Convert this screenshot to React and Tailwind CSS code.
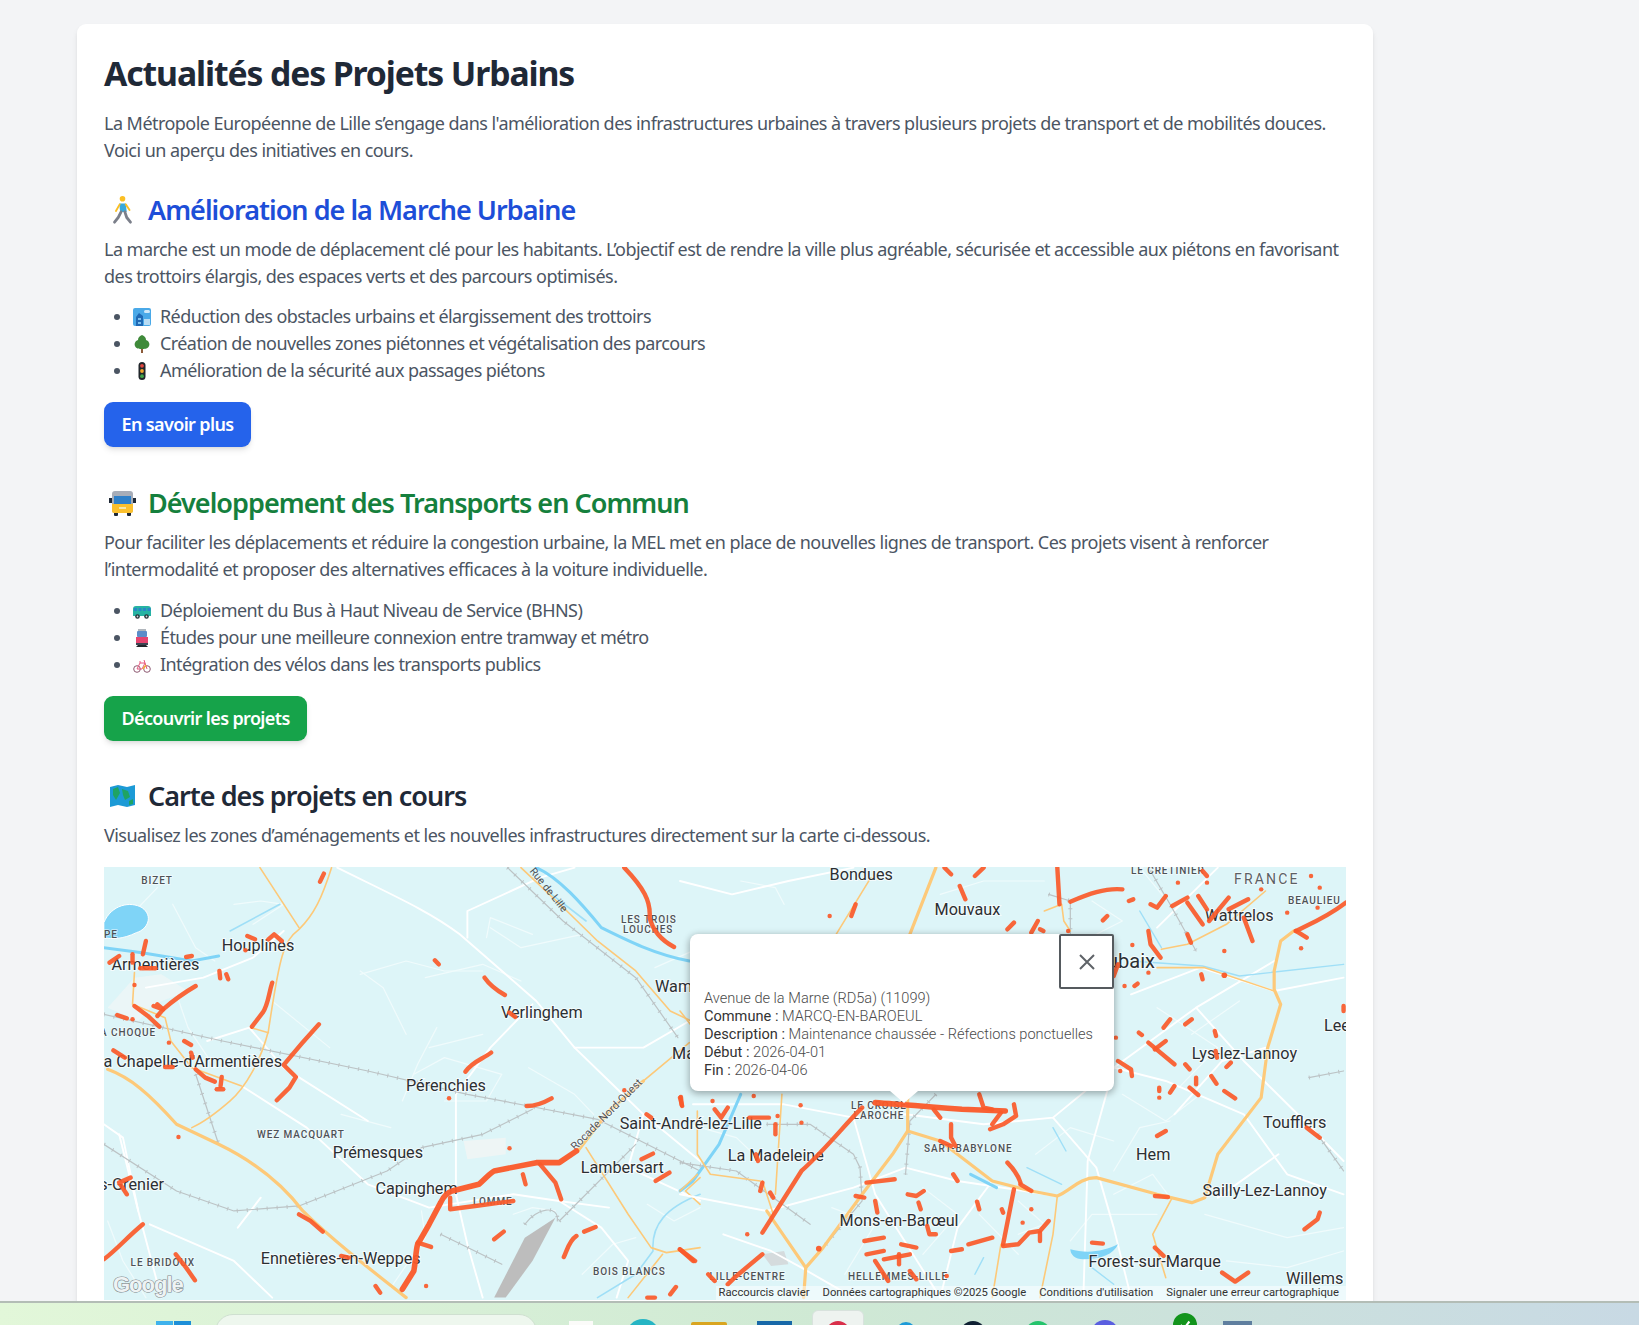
import React from 'react';

// Traces are written in the coordinates of two crops of the map, then scaled back
const WEST = 'translate(100 860) scale(.3827 .3333)';
const EAST = 'translate(680 860) scale(.4337 .3333)';

const westWhite = [
  'M620 20 C760 100 860 150 940 220 L1060 340 L1140 420 L1240 560 L1330 660 L1420 760 L1568 900',
  'M370 675 L540 800 L700 970 L860 1040 L1080 1000 L1200 1020 L1330 1040',
  'M1130 430 L1020 560 L930 700 L930 1000 L960 1150 L1000 1310',
  'M960 230 L960 150 L1150 50 L1240 20',
  'M50 820 L100 1050 L160 1310',
  'M10 790 L60 830 L100 1050',
  'M120 380 L270 350 L400 290 L480 210',
  'M280 540 L390 500 L480 620 L700 780',
  'M1200 1020 L1310 1100 L1380 1200 L1350 1310',
  'M1240 560 L1420 560 L1540 480',
  'M130 1090 L350 1200 L450 1310',
  'M420 1010 L360 1100',
  'M1420 760 L1380 920 L1568 1020',
];
const westThin = [
  'M850 350 L1000 310 L1100 360',
  'M680 330 L740 380 L800 520',
  'M860 560 L1000 520',
  'M1430 1030 L1500 1080 L1568 1040',
  'M450 420 L600 560',
  'M190 130 L250 260 L300 300',
  'M350 130 L420 120 L480 130 L400 190',
  'M150 80 L100 140',
  'M680 340 L800 300 L900 330 L1000 330',
  'M820 640 L900 590 L1050 640 L1010 720 L900 720',
  'M1020 200 L1100 260 L1260 220',
  'M790 720 L830 610 L880 500',
  'M1010 230 L1020 170 L1130 220',
  'M630 760 L760 800',
  'M1080 1060 L1130 1040 L1190 1050',
  'M1260 1240 L1340 1150 L1400 1130',
  'M840 1050 L850 1130 L760 1280',
  'M200 400 L230 500 L300 620',
  'M20 1080 L60 1200 L120 1310',
  'M1450 320 L1568 260',
  'M1120 620 L1240 700 L1290 760',
];
const westWater = [
  'M1140 20 C1200 50 1260 130 1310 200 C1380 240 1450 280 1540 300',
  'M10 260 L110 275 L240 300 L310 285',
];
const westThinWater = [
  'M340 210 L470 130',
  'M1180 100 L1270 180',
  'M1568 1000 C1480 1040 1440 1090 1445 1170 L1400 1240 L1300 1310',
];
const westRail = [
  'M10 460 L320 540 L700 630 L960 700 L1120 735 L1300 775 L1568 930',
  'M10 850 L200 990 L350 1050 L520 1035 L750 930 L840 860 L1000 820 L1130 745',
  'M1065 20 L1210 180 L1400 350 L1510 530',
  'M250 640 L310 850',
  'M1200 1080 L1400 850',
  'M890 1120 L1050 1210',
  'M1110 1090 C1140 1040 1200 1030 1195 1080',
];
const westOrange = [
  'M418 20 L520 200',
  'M605 20 C580 110 560 160 520 205 C480 240 470 280 440 510 C420 600 380 680 340 720 C300 760 260 790 240 800',
  'M90 335 L85 430 L170 470 L185 540 L240 620 L370 675',
  'M395 500 L440 515',
  'M1100 20 L1220 150 L1300 240 L1400 330 L1490 450 L1545 480',
  'M1420 660 L1540 545',
  'M1270 860 L1380 1060 L1440 1160 L1480 1175 L1568 1160',
  'M1470 1180 L1380 1310',
  'M1530 990 L1568 950 M1530 990 L1568 1030',
];
const westOrangeWide = [
  'M20 625 C80 650 130 700 200 790 L310 850 C400 900 470 960 530 1050 C600 1130 700 1220 800 1310',
  'M1420 660 L1330 750 L1250 868',
];
const westRed = [
  'M1370 20 C1420 80 1440 120 1436 170 C1445 210 1470 240 1500 258',
  'M585 38 L575 62', 'M385 225 L405 235', 'M440 235 L455 220 L475 240', 'M120 240 L112 280',
  'M25 305 L50 285', 'M85 280 L85 305', 'M105 322 L145 322', 'M225 288 L240 285',
  'M312 330 L314 352', 'M330 340 L335 355', 'M380 268 l.1 0', 'M875 298 L885 310',
  'M1005 350 C1020 375 1040 390 1058 402', 'M1070 455 L1085 468',
  'M250 375 C220 395 190 420 165 445 L150 465', 'M140 435 L165 445 L150 430',
  'M90 435 L125 465 L155 497', 'M45 462 L70 472', 'M85 475 l.1 0', 'M90 372 l.1 0',
  'M450 365 C440 400 440 430 425 455 L397 497',
  'M572 490 C540 530 510 570 480 612 L512 648 L495 680 L462 718',
  'M180 545 l.1 0', 'M220 540 L238 552', 'M238 575 L242 590', 'M35 568 L65 590', 'M170 618 L190 618',
  'M250 625 L275 650 L300 662', 'M318 648 L315 675', 'M305 685 L322 685',
  'M955 632 C975 600 1000 595 1022 575', 'M912 712 l.1 0',
  'M1115 735 C1140 735 1160 725 1180 712', 'M1518 708 L1520 732', 'M1428 760 L1440 770', 'M1370 688 l.1 0',
  'M1150 910 L1190 965 L1205 1015', 'M1105 940 L1112 970',
  'M915 1010 L915 1045 L980 1035 L1080 1020', 'M1070 862 l.1 0', 'M1415 895 L1445 878', 'M1452 960 L1488 935',
  'M830 1145 L865 1158', 'M1055 1112 L1030 1135', 'M1245 1125 C1225 1140 1220 1170 1212 1188',
  'M1265 1112 L1295 1098', 'M520 1060 L550 1080 L582 1112', 'M630 1185 L650 1190',
  'M112 1090 C70 1130 40 1170 10 1195', 'M198 1180 L225 1220 L248 1258', 'M720 1275 L732 1295',
  'M852 1275 l.1 0', 'M1490 1300 L1505 1278', 'M1430 1310 L1450 1310', 'M1515 1165 L1555 1200',
  'M80 950 L50 965 L70 1000', 'M205 828 l.1 0',
];
const westRedWide = [
  'M790 1285 L820 1230 C825 1200 825 1170 830 1150 L860 1090 L890 1025 C900 1000 910 995 920 990 L990 970 C1010 950 1020 935 1030 930 L1140 905 L1200 905 L1245 870',
];

const eastWhite = [
  'M0 60 L120 100 L250 60 L400 20',
  'M30 730 L240 730 L400 770 L520 760 L700 790 L860 770 L1000 620 L1190 440 L1370 300',
  'M0 1000 L200 1050 L400 980 L520 920 L640 960 L870 1005',
  'M1000 620 L1120 660 L1300 760 L1400 940 L1530 1000',
  'M1190 440 L1300 600 L1440 780 L1530 900',
  'M860 770 L960 920 L1000 1100 L1040 1310',
  'M600 1310 L640 1100 L720 960',
  'M400 770 L450 1000 L600 1310',
  'M1040 400 L1200 320 L1370 390 L1530 350',
  'M1000 620 L940 900 L930 1310',
  'M1140 760 L1250 600 L1350 560',
  'M100 1120 L210 1170 L280 1220 L400 1310',
  'M1100 200 L1240 20',
  'M0 380 L70 360',
  'M1380 880 L1240 1010',
];
const eastThin = [
  'M140 60 L220 80 L240 130',
  'M600 100 L700 60 L840 60',
  'M1130 780 L1060 800 L1000 930',
  'M1210 1060 L1400 1130 L1530 1100',
  'M780 1020 L840 1090 L780 1120',
  'M1100 1060 L950 1060 L900 1140',
  'M1060 20 L1130 130 L1190 270',
  'M1100 440 L1240 560 L1150 680',
  'M1290 420 L1180 520',
  'M1020 700 L1120 780 L1200 700',
  'M560 980 L640 1060 L560 1180',
  'M350 1040 L450 1090 L380 1240',
  'M20 790 L130 830 L170 880',
  'M820 880 L900 800 L1000 840',
  'M1260 1200 L1400 1220 L1530 1170',
  'M1000 1000 L1090 940 L1130 1010',
  'M690 1060 L780 1180',
  'M950 120 L1020 180 L960 220',
];
const eastWater = ['M140 700 L90 850 L30 960 L0 990', 'M670 940 L730 980'];
const eastThinWater = [
  'M1040 300 L1205 315 L1290 345 L1530 310',
  'M800 920 L880 970',
  'M860 800 L890 870',
  'M1060 150 L1110 260',
  'M700 1190 L680 1240',
  'M950 1220 L1000 1270',
];
const eastLakes = ['M900 1165 C940 1180 980 1170 1010 1150 C1000 1180 970 1195 930 1195 C910 1195 900 1180 900 1165 Z'];
const eastRail = [
  'M0 905 L130 930 L300 1090',
  'M200 790 L300 790 L400 880 L415 920 L420 1020 L330 1160',
  'M590 700 L530 780 L520 940',
  'M850 100 L900 120 L900 220',
  'M1085 30 L1130 130 L1190 270',
  'M1450 650 L1530 630',
  'M1470 820 L1530 930',
];
const eastOrange = [
  'M440 50 L360 220',
  'M1100 320 L1210 320 L1370 390',
  'M840 150 L880 130 L885 180 L900 210',
  'M1110 265 L1170 250 L1260 190 L1350 90',
  'M1135 1010 L1090 1120 L1120 1250',
  'M190 960 L215 1060',
  'M235 700 L220 1000',
  'M40 750 L40 880 L70 940 L185 960',
  'M40 940 L0 990',
  'M870 1005 L860 1120 L830 1310',
  'M720 1310 L740 1150',
  'M0 450 L30 500',
];
const eastOrangeWide = [
  'M590 20 L530 220',
  'M525 700 L525 810 L490 880 L420 1000 L330 1160 L290 1220 L285 1310',
  'M525 810 L600 840 L660 900 L720 960 L810 990 L870 1005 C900 990 920 950 960 950 L1100 1000 L1180 1025 L1210 1010 L1240 880 L1340 710 L1355 560 L1385 430 L1370 385 L1370 330 L1385 240 L1415 210',
  'M200 1050 L290 1220',
];
const eastRed = [
  'M610 20 L625 40', 'M700 20 L680 45', 'M645 75 L658 115', 'M405 130 L395 165', 'M345 165 l.1 0',
  'M870 20 L875 130', 'M900 122 C940 100 980 80 1020 85', 'M1035 120 L1045 115', 'M1085 130 L1100 140 L1120 105',
  'M1135 135 L1170 110', 'M1170 125 L1205 190', 'M1195 105 L1215 145', 'M1220 180 L1265 110', 'M1265 145 L1310 115',
  'M1300 170 L1320 240', 'M1148 65 l.1 0', 'M1215 65 l.1 0', 'M1205 30 L1215 45', 'M1340 85 l.1 0', 'M1455 45 l.1 0',
  'M1475 80 l.1 0', 'M1400 155 l.1 0', 'M1470 140 l.1 0', 'M1535 125 C1490 170 1450 190 1420 210', 'M1420 210 L1445 230',
  'M1432 262 l.1 0', 'M985 165 L975 178', 'M770 185 L755 205', 'M810 215 L825 180', 'M830 205 L838 210', 'M895 210 l.1 0',
  'M1080 210 L1085 250 L1108 290', 'M1170 220 L1178 245', 'M1043 252 l.1 0', 'M1255 270 l.1 0', 'M1202 340 L1205 355',
  'M1080 335 l.1 0', 'M1055 368 L1048 375', 'M1025 375 l.1 0', 'M1010 310 L1000 345', 'M1130 475 L1115 500',
  'M1180 475 L1165 490', 'M1058 515 L1065 522', 'M1233 510 L1236 525', 'M1005 530 l.1 0', 'M1080 545 L1140 610',
  'M1120 540 L1095 565', 'M1010 600 L1040 625 L1042 645', 'M1015 630 l.1 0', 'M1165 610 L1175 625', 'M1235 570 L1238 590',
  'M1270 605 L1260 618', 'M1190 650 L1190 670', 'M1225 645 L1237 668', 'M1175 680 L1195 702', 'M1255 690 L1280 712',
  'M1105 680 L1105 690', 'M1140 675 L1130 695', 'M1105 710 l.1 0', 'M1530 435 L1530 450',
  'M690 700 L700 740 L720 745', 'M770 730 L775 765 L745 790 L715 805', 'M740 755 L720 790', 'M585 745 L600 770',
  'M420 740 C380 790 340 860 280 930 L190 1115', 'M80 745 L95 770 L110 740', 'M0 710 L5 735', 'M75 720 l.1 0',
  'M170 705 l.1 0', 'M278 733 l.1 0', 'M225 765 l.1 0', 'M160 770 L205 770', 'M220 790 L220 820', 'M280 785 l.1 0',
  'M175 880 L180 900', 'M190 965 L185 990', 'M208 995 L215 1010', 'M625 790 L625 830 L635 855', 'M600 840 L625 855',
  'M630 940 L640 960', 'M755 905 C770 925 780 945 785 965', 'M770 985 L745 1150', 'M785 970 L810 990',
  'M745 1155 L780 1150 L805 1115 L830 1110 L850 1080', 'M830 1115 L830 1140', 'M430 965 L495 955', 'M405 1005 L425 1010',
  'M525 1000 L545 1005 L562 990', 'M450 1020 L455 1055', 'M550 1025 L555 1045', 'M685 1022 L690 1045', 'M742 1045 L745 1055',
  'M810 1045 l.1 0', 'M790 1085 l.1 0', 'M1100 825 L1120 810', 'M1445 800 L1475 830', 'M1475 1055 L1470 1075 L1440 1105',
  'M570 1095 L575 1120 L590 1120', 'M425 1140 L470 1130', 'M430 1180 L470 1170', 'M510 1150 L545 1160', 'M470 1195 L530 1180',
  'M505 1180 L505 1210', 'M450 1200 L480 1260', 'M530 1230 L545 1255', 'M625 1170 L650 1165', 'M665 1150 L720 1130',
  'M155 1120 l.1 0', 'M190 1180 L130 1245 L110 1270', 'M0 1165 L30 1200', 'M65 1240 L80 1260', 'M950 1145 L975 1148',
  'M1095 1160 L1115 1185', 'M1250 1235 L1280 1262 L1310 1235', 'M1095 1005 L1125 1008', 'M615 1245 l.1 0',
];
const eastRedWide = ['M450 725 C500 730 560 735 650 745 L750 750', 'M320 1163 l.1 0', 'M1255 343 l.1 0'];

const towns = [
  [221.7, 950, 'Houplines'], [111.5, 969, 'Armentières'], [501, 1017, 'Verlinghem'], [406, 1090, 'Pérenchies'],
  [332.7, 1156.7, 'Prémesques'], [375.5, 1193, 'Capinghem'], [580.7, 1171.7, 'Lambersart'], [619.7, 1127.7, 'Saint-André-lez-Lille'],
  [655, 990.7, 'Wambrechies'], [672, 1058, 'Marquette'], [260.7, 1263, 'Ennetières-en-Weppes'], [829.6, 879, 'Bondues'],
  [934.5, 914, 'Mouvaux'], [1204.7, 920, 'Wattrelos'], [1191.7, 1058, 'Lys-lez-Lannoy'], [1324, 1030, 'Leers'],
  [1263, 1127, 'Toufflers'], [1136, 1159, 'Hem'], [1202.5, 1195, 'Sailly-Lez-Lannoy'], [727.7, 1160, 'La Madeleine'],
  [839.6, 1225, 'Mons-en-Barœul'], [1088.5, 1266, 'Forest-sur-Marque'], [1286, 1283, 'Willems'],
];
const districts = [
  [141.3, 882.6, 'BIZET'], [257, 1136.7, 'WEZ MACQUART'], [130.6, 1265, 'LE BRIDOUX'], [593, 1274, 'BOIS BLANCS'],
  [621, 922, 'LES TROIS'], [623, 932, 'LOUCHES'], [1131, 873, 'LE CRETINIER'], [1288, 902.7, 'BEAULIEU'],
  [924, 1150.7, 'SART-BABYLONE'], [851, 1108, 'LE CROISÉ'], [853.5, 1118, 'LAROCHE'], [709.5, 1279, 'LILLE-CENTRE'],
  [848, 1279, 'HELLEMMES-LILLE'], [104, 937, 'PE'], [473, 1204, 'LOMME'],
];

function Traces({ paths, color, width, dash, opacity }) {
  return paths.map((d, i) => (
    <path
      key={i}
      d={d}
      fill="none"
      stroke={color}
      strokeWidth={width}
      strokeLinecap={dash ? 'butt' : 'round'}
      strokeLinejoin="round"
      strokeDasharray={dash}
      opacity={opacity}
      vectorEffect="non-scaling-stroke"
    />
  ));
}

function TownLabel({ x, y, children, anchor, size = 16.2 }) {
  return (
    <text x={x} y={y} textAnchor={anchor} fontSize={size} fill="#2b2f33" stroke="#ffffff" strokeOpacity=".7" strokeWidth="2" paintOrder="stroke">
      {children}
    </text>
  );
}

function SmallLabel({ x, y, children, anchor }) {
  return (
    <text x={x} y={y} textAnchor={anchor} fontSize="10" letterSpacing=".9" fontWeight="500" fill="#4d5257" stroke="#ffffff" strokeOpacity=".6" strokeWidth="1.5" paintOrder="stroke">
      {children}
    </text>
  );
}

function BaseMap() {
  return (
    <svg viewBox="104 866 1242 433" className="block w-full h-full [font-family:Roboto,sans-serif]">
      <rect x="104" y="866" width="1242" height="433" fill="#ddf5f8" />
      <g transform={WEST}>
        <Traces paths={westThin} color="#f0fbfc" width="1.2" />
        <path d="M140 430 L230 390 L160 340 L90 350 L20 440 L100 480 Z" fill="#eff6f6" opacity=".8" />
        <path d="M950 840 L1060 830 L1060 880 L960 895 Z" fill="#eef5f5" />
        <Traces paths={westWhite} color="#ffffff" width="1.9" />
        <path d="M10 185 C30 130 80 120 110 140 C140 165 125 205 95 215 C60 235 30 235 10 230 Z" fill="#7fd4f7" stroke="#ffffff" strokeWidth="1" vectorEffect="non-scaling-stroke" />
        <Traces paths={westWater} color="#7fd4f7" width="3" />
        <Traces paths={westThinWater} color="#9fdff7" width="1.6" />
        <path d="M1030 1310 L1110 1130 L1190 1070 L1130 1200 L1060 1310 Z" fill="#bdbdbd" />
        <Traces paths={westRail} color="#bcc3c5" width="1.2" />
        <Traces paths={westRail} color="#bcc3c5" width="4" dash="1 9" />
        <Traces paths={westOrange} color="#fdc979" width="1.6" />
        <Traces paths={westOrangeWide} color="#fdc979" width="3.2" />
      </g>
      <g transform={EAST}>
        <path d="M190 1180 L240 1170 L250 1210 L210 1215 Z" fill="#d5dbdd" />
        <Traces paths={eastThin} color="#f0fbfc" width="1.2" />
        <Traces paths={eastWhite} color="#ffffff" width="1.9" />
        {eastLakes.map((d) => (
          <path key={d} d={d} fill="#7fd4f7" />
        ))}
        <Traces paths={eastWater} color="#7fd4f7" width="3" />
        <Traces paths={eastThinWater} color="#9fdff7" width="1.4" />
        <Traces paths={eastRail} color="#bcc3c5" width="1.2" />
        <Traces paths={eastRail} color="#bcc3c5" width="4" dash="1 9" />
        <Traces paths={eastOrange} color="#fdc979" width="1.6" />
        <Traces paths={eastOrangeWide} color="#fdc979" width="3.2" />
      </g>
      {towns.map(([x, y, name]) => (
        <TownLabel key={name} x={x} y={y}>{name}</TownLabel>
      ))}
      <SmallLabel x={156} y={1035} anchor="end">LA CHOQUE</SmallLabel>
      <TownLabel x={282} y={1066} anchor="end">La Chapelle-d'Armentières</TownLabel>
      <TownLabel x={164} y={1189} anchor="end">Bois-Grenier</TownLabel>
      <TownLabel x={1155} y={966.7} anchor="end" size={20}>Roubaix</TownLabel>
      {districts.map(([x, y, name]) => (
        <SmallLabel key={name} x={x} y={y}>{name}</SmallLabel>
      ))}
      <text x="1234" y="882.7" fontSize="14" letterSpacing="2.2" fill="#5b6064" stroke="#ffffff" strokeOpacity=".6" strokeWidth="1.5" paintOrder="stroke">FRANCE</text>
      <text transform="translate(546 891) rotate(51)" textAnchor="middle" fontSize="10.5" fill="#4d5257">Rue de Lille</text>
      <text transform="translate(609 1116) rotate(-45)" textAnchor="middle" fontSize="11" fill="#4d5257" stroke="#ffffff" strokeOpacity=".6" strokeWidth="1.5" paintOrder="stroke">Rocade Nord-Ouest</text>
      <g transform={WEST}>
        <Traces paths={westRed} color="#fb5a2a" width="4.4" opacity=".92" />
        <Traces paths={westRedWide} color="#fb5a2a" width="5.6" opacity=".95" />
      </g>
      <g transform={EAST}>
        <Traces paths={eastRed} color="#fb5a2a" width="4.4" opacity=".92" />
        <Traces paths={eastRedWide} color="#fb5a2a" width="5.6" opacity=".95" />
      </g>
      <text x="113" y="1291" fontSize="22" fontWeight="700" fill="#eef3f4" stroke="#7d8589" strokeWidth="1.2" paintOrder="stroke" className="[font-family:'Liberation_Sans',sans-serif]" letterSpacing="-1">Google</text>
    </svg>
  );
}

function WalkerIcon() {
  return (
    <svg viewBox="0 0 27 32" className="w-[27px] h-[30px]">
      <circle cx="13.5" cy="4" r="3" fill="#fbbf24" />
      <path d="M10 9 L17 9 L18 18 L11 18 Z" fill="#38a9dc" />
      <path d="M10.5 10 L6.5 17 M17 10 L21 16" stroke="#fbbf24" strokeWidth="2" strokeLinecap="round" fill="none" />
      <path d="M12 18 L9 24 L5 29 M16 18 L18 24 L22 29" stroke="#7b7f8a" strokeWidth="3" strokeLinecap="round" fill="none" />
    </svg>
  );
}

function BusFrontIcon() {
  return (
    <svg viewBox="0 0 27 27" className="w-[27px] h-[27px]">
      <rect x="5" y="22" width="4" height="4" rx="1" fill="#1f2937" />
      <rect x="18" y="22" width="4" height="4" rx="1" fill="#1f2937" />
      <path d="M0 8 L3 8 L3 13 L0 13 Z M24 8 L27 8 L27 13 L24 13 Z" fill="#1f2937" />
      <rect x="3" y="1" width="21" height="22" rx="3" fill="#a7adb8" />
      <rect x="5" y="6" width="17" height="8" fill="#2f80c9" />
      <path d="M3 14 H24 V21 Q24 23 22 23 H5 Q3 23 3 21 Z" fill="#fbc02d" />
      <rect x="10" y="17" width="7" height="2" fill="#f5e6a8" />
    </svg>
  );
}

function MapIcon() {
  return (
    <svg viewBox="0 0 27 24" className="w-[27px] h-[24px]">
      <path d="M1 3 L9 1 L18 3 L26 1 L26 21 L18 23 L9 21 L1 23 Z" fill="#1c9ad6" />
      <path d="M4 5 L9 3 L11 9 L7 16 L4 11 Z M13 5 L19 7 L21 13 L16 16 L14 11 Z M20 17 L24 15 L24 20 L20 21 Z" fill="#1fa363" />
    </svg>
  );
}

function CityIcon() {
  return (
    <svg viewBox="0 0 18 18" className="w-[18px] h-[18px]">
      <rect width="18" height="18" rx="2" fill="#4aa9e8" />
      <rect x="11" y="2" width="6" height="3" rx="1.5" fill="#cfe9fa" />
      <path d="M3 18 V9 L6 5 L10 8 V18 Z" fill="#1f69b5" />
      <rect x="11" y="11" width="6" height="6" fill="#b8dcf4" />
      <path d="M5 10 h3 v2 h-3 Z M5 14 h3 v2 h-3 Z" fill="#7cc0ee" />
    </svg>
  );
}

function TreeIcon() {
  return (
    <svg viewBox="0 0 18 18" className="w-[18px] h-[18px]">
      <rect x="8" y="13" width="2" height="5" fill="#8d5b3a" />
      <path d="M9 0 C12 1 13 3 13 5 C16 6 17 9 16 11 C15 14 11 14 9 14 C7 14 3 14 2 11 C1 9 2 6 5 5 C5 3 6 1 9 0 Z" fill="#3f8a3a" />
    </svg>
  );
}

function TrafficLightIcon() {
  return (
    <svg viewBox="0 0 18 18" className="w-[18px] h-[18px]">
      <rect x="5.5" y="0" width="7" height="18" rx="3.5" fill="#20262b" />
      <circle cx="9" cy="3.8" r="1.9" fill="#e0463f" />
      <circle cx="9" cy="9" r="1.9" fill="#f3a82c" />
      <circle cx="9" cy="14.2" r="1.9" fill="#42a54a" />
    </svg>
  );
}

function SmallBusIcon() {
  return (
    <svg viewBox="0 0 18 18" className="w-[18px] h-[18px]">
      <path d="M0 7 Q0 4 3 4 H15 Q18 4 18 7 V14 H0 Z" fill="#26b3a3" />
      <path d="M1 6 h3 v3 h-3 Z M5.5 6 h3 v3 h-3 Z M10 6 h3 v3 h-3 Z M14.5 6 h3 v3 h-3 Z" fill="#2a86c8" />
      <circle cx="4.5" cy="14.5" r="2.3" fill="#263238" />
      <circle cx="13.5" cy="14.5" r="2.3" fill="#263238" />
      <circle cx="4.5" cy="14.5" r=".9" fill="#cfd8dc" />
      <circle cx="13.5" cy="14.5" r=".9" fill="#cfd8dc" />
    </svg>
  );
}

function TramIcon() {
  return (
    <svg viewBox="0 0 18 18" className="w-[18px] h-[18px]">
      <rect x="5" y="0" width="8" height="2" fill="#b0b6bc" />
      <rect x="4" y="2" width="10" height="6" rx="1" fill="#5c8dc9" />
      <rect x="3" y="8" width="12" height="6" fill="#e6456f" />
      <rect x="3" y="14" width="12" height="2" fill="#3b4552" />
      <path d="M3 18 L5 16 H13 L15 18 Z" fill="#20262b" />
    </svg>
  );
}

function BikeIcon() {
  return (
    <svg viewBox="0 0 18 18" className="w-[18px] h-[18px]" fill="none">
      <circle cx="4" cy="13" r="3.3" stroke="#8e5a72" strokeWidth="1" />
      <circle cx="14" cy="13" r="3.3" stroke="#8e5a72" strokeWidth="1" />
      <path d="M4 13 L7 7 L12 7 L9 13 Z M12 7 L14 13 M11 4 L12 7 M6 6 H8" stroke="#e8577e" strokeWidth="1" />
      <path d="M10 13 L13 9" stroke="#f2b138" strokeWidth="1.4" />
    </svg>
  );
}

function BulletList({ items }) {
  return (
    <ul className="list-disc pl-[29px] leading-[27px] text-[18px] text-[#4b5563] mb-[18px] tracking-[-0.032em] marker:text-[#4b5563]">
      {items.map(([icon, text]) => (
        <li key={text}>
          <span className="inline-flex items-center h-[18px] align-[-3px] mr-[9px]">{icon}</span>
          {text}
        </li>
      ))}
    </ul>
  );
}

function SectionTitle({ icon, color, children }) {
  return (
    <h2 className={`flex items-center h-[36px] mb-[8px] text-[27px] font-semibold tracking-[-0.036em] ${color}`}>
      <span className="flex justify-center w-[36px] mr-[8px] shrink-0">{icon}</span>
      {children}
    </h2>
  );
}

function Taskbar() {
  return (
    <div className="h-[24px] shrink-0 overflow-hidden border-t-2 border-[#b3bdb6] bg-gradient-to-r from-[#e2f7d9] via-[#cfe9d4] to-[#c8d9e4] flex items-start pl-[156px]">
      <div className="mt-[18px] w-[35px] h-[10px] grid grid-cols-2 gap-[1px] shrink-0">
        <div className="bg-[#3fb2ec]" />
        <div className="bg-[#1d8fd8]" />
      </div>
      <div className="ml-[24px] mt-[11px] w-[322px] h-[30px] rounded-t-[18px] bg-[#eef7ee] border border-[#cfe0d0] shrink-0" />
      <div className="ml-[32px] mt-[18px] w-[24px] h-[10px] bg-[#fbfbf9] shrink-0" />
      <div className="ml-[33px] mt-[16px] w-[34px] h-[34px] rounded-full bg-[#26b5c4] shrink-0" />
      <div className="ml-[31px] mt-[19px] w-[36px] h-[10px] rounded-t-[2px] bg-[#d9a520] shrink-0" />
      <div className="ml-[30px] mt-[18px] w-[35px] h-[10px] bg-[#1768a8] shrink-0" />
      <div className="ml-[20px] mt-[7px] w-[52px] h-[30px] rounded-t-[6px] bg-[#eef3f0] border border-[#d8e2dd] flex justify-center shrink-0">
        <div className="mt-[10px] w-[24px] h-[24px] rounded-full border-[4px] border-[#d92f4a]" />
      </div>
      <div className="ml-[32px] mt-[19px] w-[20px] h-[20px] rounded-full bg-[#1d9bd8] shrink-0" />
      <div className="ml-[44px] mt-[18px] w-[26px] h-[26px] rounded-full bg-[#0f2133] shrink-0" />
      <div className="ml-[39px] mt-[18px] w-[26px] h-[26px] rounded-full bg-[#25c36c] shrink-0" />
      <div className="ml-[40px] mt-[17px] w-[28px] h-[28px] rounded-full bg-[#5a5fe0] shrink-0" />
      <div className="ml-[54px] mt-[10px] w-[24px] h-[24px] rounded-full bg-[#12941c] shrink-0 flex justify-center">
        <svg viewBox="0 0 16 16" className="w-[14px] h-[14px] mt-[5px]" fill="none">
          <path d="M3 8 L7 12 L13 4" stroke="#ffffff" strokeWidth="2.4" />
        </svg>
      </div>
      <div className="ml-[26px] mt-[18px] w-[29px] h-[10px] bg-[#5f7f9f] shrink-0" />
    </div>
  );
}

export default function App() {
  return (
    <div className="h-[1325px] flex flex-col overflow-hidden bg-[#f3f4f6] [font-family:'Noto_Sans',sans-serif]">
      <main className="flex-1 min-h-0 overflow-hidden pt-[24px] pl-[77px]">
        <section className="w-[1296px] bg-white rounded-[9px] shadow-md p-[27px]">
          <h1 className="text-[33.75px] leading-[44px] font-bold text-[#1f2937] mb-[15px] tracking-[-0.033em]">
            Actualités des Projets Urbains
          </h1>
          <p className="text-[18px] leading-[27px] text-[#4b5563] mb-[28px] tracking-[-0.03em]">
            La Métropole Européenne de Lille s’engage dans l'amélioration des infrastructures urbaines à travers plusieurs projets de transport et de mobilités douces. Voici un aperçu des initiatives en cours.
          </p>

          <SectionTitle icon={<WalkerIcon />} color="text-[#1d4ed8]">Amélioration de la Marche Urbaine</SectionTitle>
          <p className="text-[18px] leading-[27px] text-[#4b5563] mb-[13px] tracking-[-0.03em]">
            La marche est un mode de déplacement clé pour les habitants. L’objectif est de rendre la ville plus agréable, sécurisée et accessible aux piétons en favorisant des trottoirs élargis, des espaces verts et des parcours optimisés.
          </p>
          <BulletList
            items={[
              [<CityIcon />, 'Réduction des obstacles urbains et élargissement des trottoirs'],
              [<TreeIcon />, 'Création de nouvelles zones piétonnes et végétalisation des parcours'],
              [<TrafficLightIcon />, 'Amélioration de la sécurité aux passages piétons'],
            ]}
          />
          <button className="block h-[45px] px-[17.5px] rounded-[9px] bg-[#2563eb] text-white text-[18px] font-semibold shadow-md tracking-[-0.035em] mb-[38px]">
            En savoir plus
          </button>

          <SectionTitle icon={<BusFrontIcon />} color="text-[#15803d]">Développement des Transports en Commun</SectionTitle>
          <p className="text-[18px] leading-[27px] text-[#4b5563] mb-[14px] tracking-[-0.03em]">
            Pour faciliter les déplacements et réduire la congestion urbaine, la MEL met en place de nouvelles lignes de transport. Ces projets visent à renforcer l’intermodalité et proposer des alternatives efficaces à la voiture individuelle.
          </p>
          <BulletList
            items={[
              [<SmallBusIcon />, 'Déploiement du Bus à Haut Niveau de Service (BHNS)'],
              [<TramIcon />, 'Études pour une meilleure connexion entre tramway et métro'],
              [<BikeIcon />, 'Intégration des vélos dans les transports publics'],
            ]}
          />
          <button className="block h-[45px] px-[17.5px] rounded-[9px] bg-[#16a34a] text-white text-[18px] font-semibold shadow-md tracking-[-0.035em] mb-[37px]">
            Découvrir les projets
          </button>

          <SectionTitle icon={<MapIcon />} color="text-[#1f2937]">Carte des projets en cours</SectionTitle>
          <p className="text-[18px] leading-[27px] text-[#4b5563] mb-[18px] tracking-[-0.03em]">
            Visualisez les zones d’aménagements et les nouvelles infrastructures directement sur la carte ci-dessous.
          </p>

          <div className="relative w-[1242px] h-[433px] overflow-hidden [font-family:Roboto,sans-serif]">
            <BaseMap />

            {/* popup over the map */}
            <div className="absolute left-[586px] top-[67px] w-[424px] h-[157px] bg-white rounded-[8px] shadow-[0_2px_7px_1px_rgba(0,0,0,0.3)] pt-[55px] pl-[14px] text-[14.6px] leading-[18px] font-light text-[#4b4b4b]">
              <button className="absolute right-0 top-0 w-[55px] h-[55px] flex items-center justify-center rounded-[2px] border-2 border-[#555a5e]">
                <svg viewBox="0 0 16 16" className="w-[16px] h-[16px]" fill="none">
                  <path d="M1 1 L15 15 M15 1 L1 15" stroke="#5f6368" strokeWidth="2" />
                </svg>
              </button>
              <div>Avenue de la Marne (RD5a) (11099)</div>
              <div><span className="font-normal text-[#333]">Commune :</span> MARCQ-EN-BAROEUL</div>
              <div><span className="font-normal text-[#333]">Description :</span> Maintenance chaussée - Réfections ponctuelles</div>
              <div><span className="font-normal text-[#333]">Début :</span> 2026-04-01</div>
              <div><span className="font-normal text-[#333]">Fin :</span> 2026-04-06</div>
            </div>
            <div className="absolute left-[786px] top-[224px] w-0 h-0 border-x-[14px] border-x-transparent border-t-[12px] border-t-white" />

            {/* attribution strip */}
            <div className="absolute right-0 bottom-0 flex gap-[13px] h-[14px] pr-[7px] pl-[3px] items-center text-[11.25px] leading-[14px] text-[#333] bg-white/50">
              <span>Raccourcis clavier</span>
              <span>Données cartographiques ©2025 Google</span>
              <span>Conditions d'utilisation</span>
              <span>Signaler une erreur cartographique</span>
            </div>
          </div>
        </section>
      </main>
      <Taskbar />
    </div>
  );
}
